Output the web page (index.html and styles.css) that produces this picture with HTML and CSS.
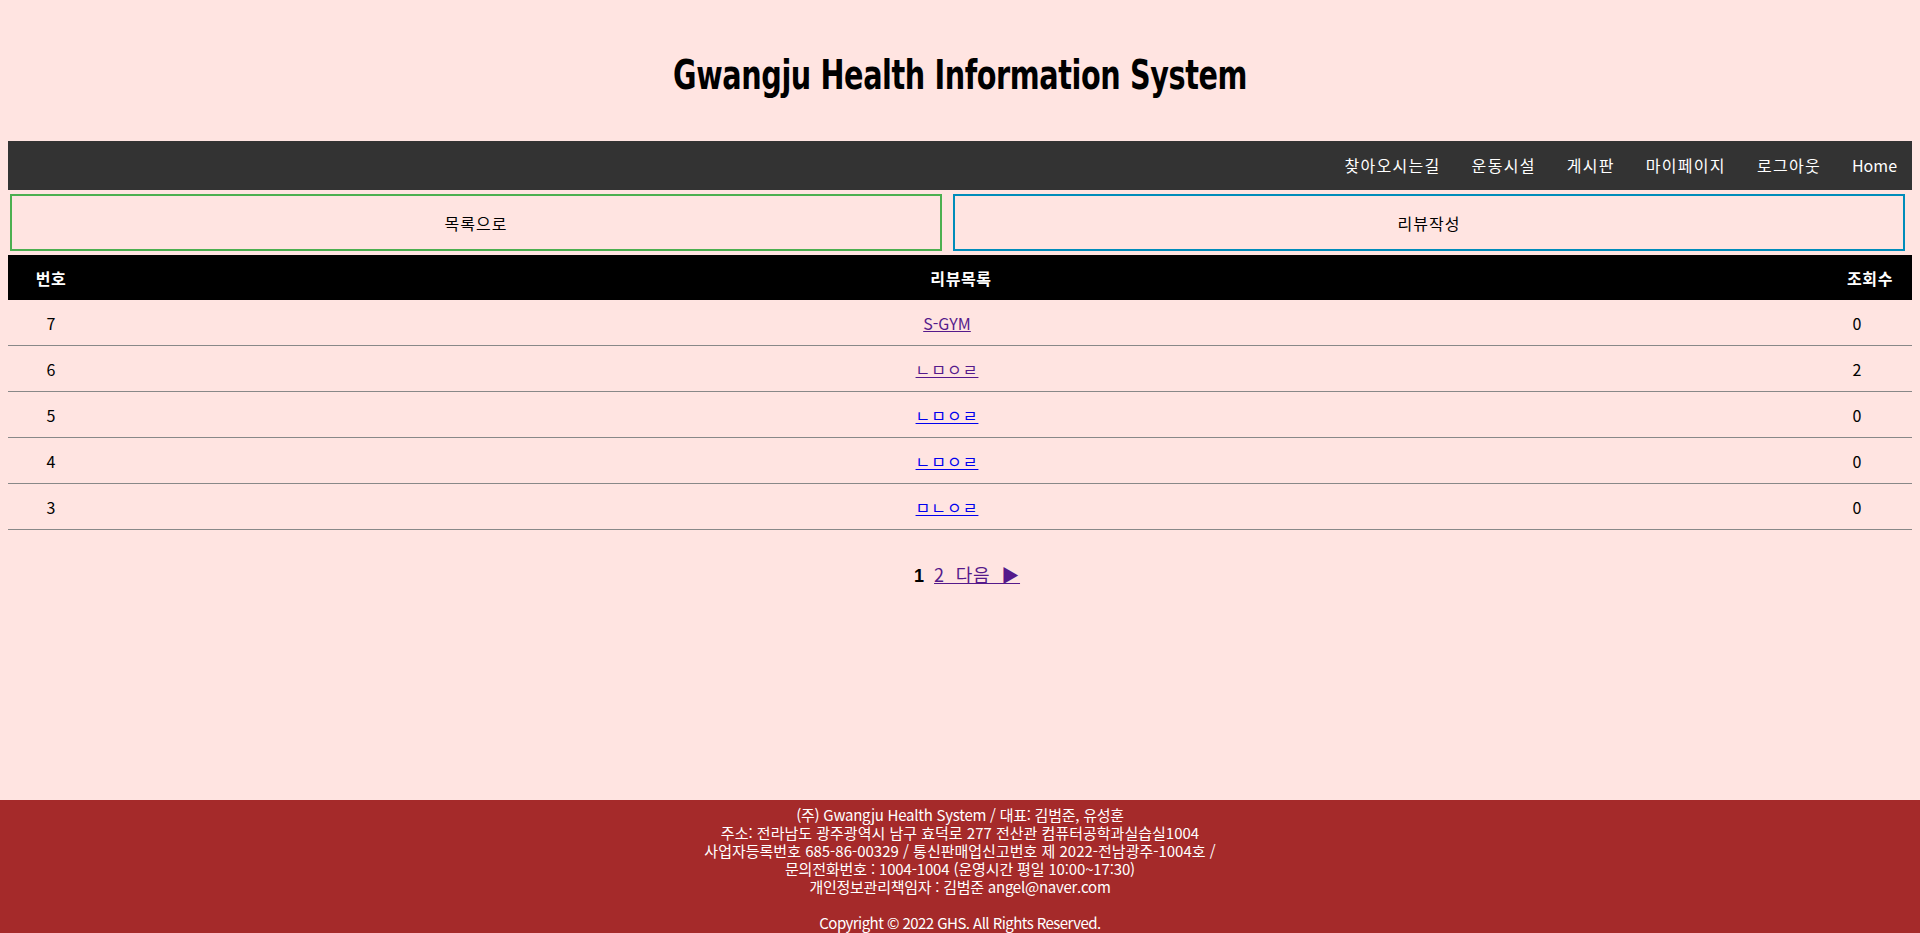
FILE: index.html
```html
<!DOCTYPE html>
<html lang="ko">
<head>
<meta charset="utf-8">
<title>Gwangju Health Information System</title>
<link rel="stylesheet" href="styles.css">
</head>
<body>
<div class="page">
  <header class="masthead">
    <h1 class="title">Gwangju Health Information System</h1>
  </header>
  <nav class="topnav">
    <a href="#">찾아오시는길</a>
    <a href="#">운동시설</a>
    <a href="#">게시판</a>
    <a href="#">마이페이지</a>
    <a href="#">로그아웃</a>
    <a href="#" class="latin">Home</a>
  </nav>
  <div class="actions">
    <button class="btn btn-green">목록으로</button>
    <button class="btn btn-blue">리뷰작성</button>
  </div>
  <table class="reviews">
    <colgroup>
      <col class="c-num">
      <col class="c-title">
      <col class="c-views">
    </colgroup>
    <thead>
      <tr><th>번호</th><th>리뷰목록</th><th>조회수</th></tr>
    </thead>
    <tbody>
      <tr><td>7</td><td class="d-title"><a class="visited" href="#">S-GYM</a></td><td class="d-views">0</td></tr>
      <tr><td>6</td><td class="d-title"><a class="visited jamo" href="#">ㄴㅁㅇㄹ</a></td><td class="d-views">2</td></tr>
      <tr><td>5</td><td class="d-title"><a class="link jamo" href="#">ㄴㅁㅇㄹ</a></td><td class="d-views">0</td></tr>
      <tr><td>4</td><td class="d-title"><a class="link jamo" href="#">ㄴㅁㅇㄹ</a></td><td class="d-views">0</td></tr>
      <tr><td>3</td><td class="d-title"><a class="link jamo" href="#">ㅁㄴㅇㄹ</a></td><td class="d-views">0</td></tr>
    </tbody>
  </table>
  <div class="pager"><b class="cur">1</b> <a class="visited" href="#">2 다음 ▶</a></div>
</div>
<footer class="footer">
  <p class="tight">(주) Gwangju Health System / 대표: 김범준, 유성훈</p>
  <p>주소: 전라남도 광주광역시 남구 효덕로 277 전산관 컴퓨터공학과실습실1004</p>
  <p>사업자등록번호 685-86-00329 / 통신판매업신고번호 제 2022-전남광주-1004호 /</p>
  <p class="slight">문의전화번호 : 1004-1004 (운영시간 평일 10:00~17:30)</p>
  <p class="tight">개인정보관리책임자 : 김범준 angel@naver.com</p>
  <p class="blank">&nbsp;</p>
  <p class="tighter">Copyright © 2022 GHS. All Rights Reserved.</p>
</footer>
</body>
</html>
```

FILE: styles.css
```css
html, body {
  margin: 0;
  padding: 0;
}
body {
  background: #ffe4e1;
  font-family: "Noto Sans CJK KR", "Noto Sans", sans-serif;
  color: #000;
  min-height: 100vh;
  display: flex;
  flex-direction: column;
}
.page {
  padding: 0 8px;
  flex: 1 0 auto;
}
.masthead {
  height: 141px;
  box-sizing: border-box;
  padding-top: 9px;
  display: flex;
  align-items: center;
  justify-content: center;
}
.title {
  margin: 0;
  display: inline-block;
  font-family: "DejaVu Sans Condensed", "DejaVu Sans", sans-serif;
  font-weight: bold;
  font-size: 40px;
  line-height: 48px;
  letter-spacing: -0.5px;
  transform: scaleX(0.797);
  transform-origin: center;
}
.topnav {
  height: 49px;
  background: #333;
  display: flex;
  justify-content: flex-end;
  align-items: center;
}
.topnav a {
  color: #fff;
  text-decoration: none;
  font-size: 16px;
  line-height: 49px;
  letter-spacing: 1.3px;
  padding: 0 16px 0 15px;
}
.topnav a.latin {
  letter-spacing: 0;
  padding-right: 15px;
}
.actions {
  margin-top: 4px;
  padding-left: 2px;
  display: grid;
  grid-template-columns: 932px 952px;
  column-gap: 11px;
}
.btn {
  height: 57px;
  background: transparent;
  font-family: inherit;
  font-size: 16px;
  letter-spacing: 1px;
  color: #000;
  margin: 0;
}
.btn-green {
  border: 2px solid #4caf50;
}
.btn-blue {
  border: 2px solid #008cba;
}
.reviews {
  margin-top: 4px;
  width: 100%;
  border-collapse: collapse;
  table-layout: fixed;
}
.c-num { width: 86px; }
.c-views { width: 84px; }
.reviews th {
  background: #000;
  color: #fff;
  font-weight: bold;
  font-size: 16px;
  letter-spacing: 0.6px;
  height: 45px;
  padding: 0;
  text-align: center;
}
.reviews td {
  height: 45px;
  padding: 0;
  font-size: 16px;
  text-align: center;
  border-bottom: 1px solid #888;
}
.reviews td.d-title {
  padding-right: 28px;
}
.reviews td.d-views {
  padding-right: 26px;
}
.visited { color: #551a8b; }
.link { color: #0000ee; }
.jamo { letter-spacing: 1px; }
.pager {
  margin-top: 32px;
  text-align: center;
  font-size: 18px;
  line-height: 24px;
  padding-left: 14px;
  word-spacing: 5px;
}
.pager a {
  letter-spacing: 0.8px;
}
.cur {
  font-family: "Liberation Sans", Arial, sans-serif;
}
.footer {
  background: #a52a2a;
  color: #fff;
  text-align: center;
  padding: 6px 0 1px;
  font-size: 15px;
  line-height: 18px;
}
.footer p {
  margin: 0;
}
.footer .slight { letter-spacing: -0.15px; }
.footer .tight { letter-spacing: -0.25px; }
.footer .tighter { letter-spacing: -0.55px; }
```
